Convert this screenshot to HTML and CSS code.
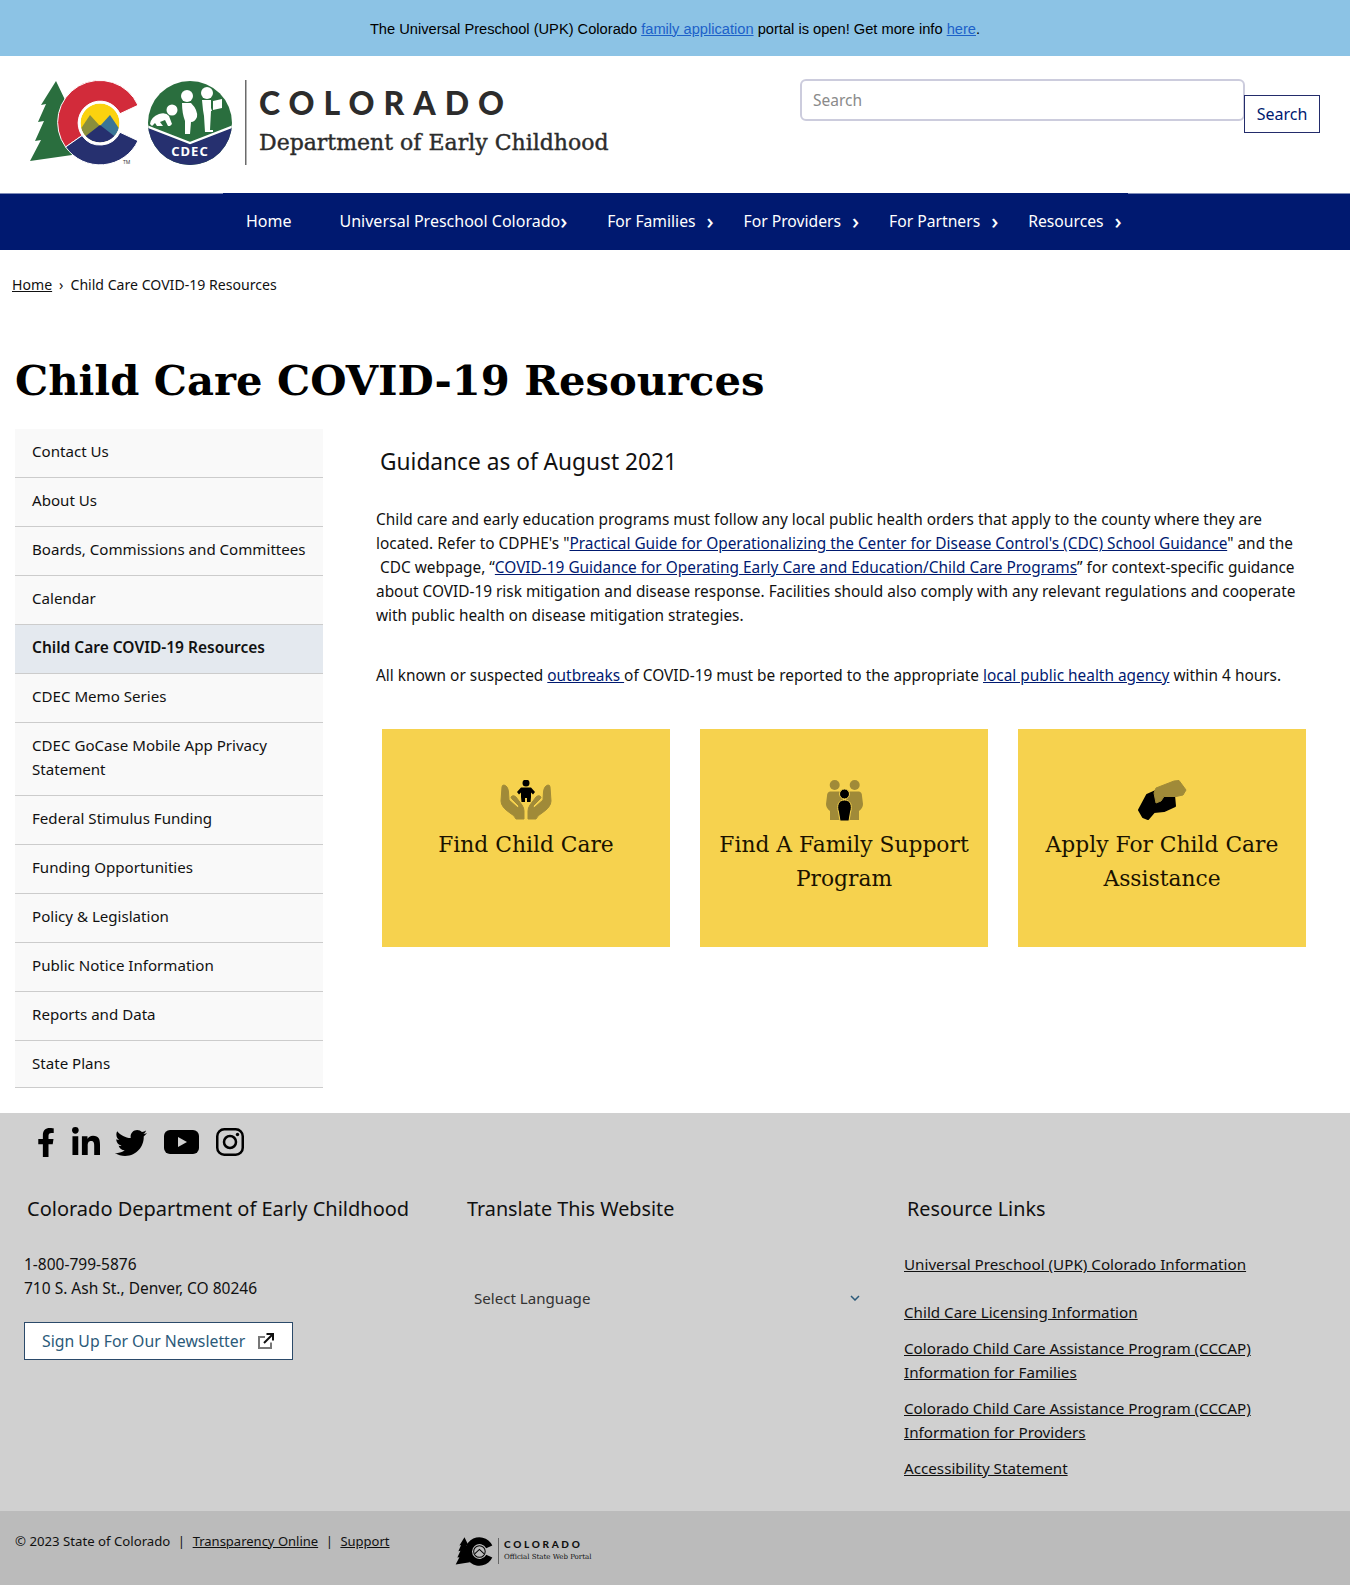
FILE: index.html
```html
<!DOCTYPE html>
<html lang="en">
<head>
<meta charset="utf-8">
<title>Child Care COVID-19 Resources</title>
<link rel="stylesheet" href="styles.css">
</head>
<body>
<div class="banner"><p>The Universal Preschool (UPK) Colorado <a href="#">family application</a> portal is open! Get more info <a href="#">here</a>.</p></div>
<header class="site-header">
  <a class="logo" href="#">
    <svg class="logo-mark" viewBox="28 78 220 90" width="220" height="90">
      <defs>
        <clipPath id="sun"><circle cx="100" cy="123" r="19.5"/></clipPath>
        <clipPath id="badge"><circle cx="190" cy="123" r="42"/></clipPath>
      </defs>
      <polygon fill="#2a6e3e" points="56,81 67,104 62,104 70,130 72,155 30,161 41,140 35,141 44,121 38,122 46,104 41,105"/>
      <path fill="#d22b3a" stroke="#fff" stroke-width="1" d="M138 105.3A42 42 0 1 0 65.6 147L82 135.6A22 22 0 1 1 120 113.7Z"/>
      <path fill="#26306f" stroke="#fff" stroke-width="1" d="M65.6 147A42 42 0 0 0 138 140.7L120 132.3A22 22 0 0 1 82 135.6Z"/>
      <g clip-path="url(#sun)">
        <rect x="78" y="100" width="44" height="46" fill="#fbd20f"/>
        <polygon fill="#8a8f3c" points="78,133 90,115 100,126 90,145"/>
        <polygon fill="#3a7596" points="122,133 110,115 100,126 110,145"/>
        <polygon fill="#26306f" points="78,142 100,125 122,142 122,146 78,146"/>
      </g>
      <circle cx="100" cy="123" r="20.5" fill="none" stroke="#fff" stroke-width="2"/>
      <text class="tm" x="123" y="164">TM</text>
      <g clip-path="url(#badge)">
        <rect x="148" y="81" width="84" height="84" fill="#2a6e3e"/>
        <polygon fill="#26306f" points="146,127 190,144 234,127 234,166 146,166"/>
        <polyline fill="none" stroke="#fff" stroke-width="2.2" points="146,126 190,143 234,126"/>
      </g>
      <g fill="#fff">
        <circle cx="172" cy="110" r="5.500"/>
        <path d="M150 124Q151 117 159 114Q166 112 169 116L172 124L170 126H168L165 120L160 122L163 126H157L155 123L152 126Z"/>
        <circle cx="187" cy="96" r="6"/>
        <path d="M182 103H191Q198 110 197 117Q195 122 191 122L190 134H185L185 121Q182 113 182 103Z"/>
        <circle cx="207" cy="93" r="6"/>
        <path d="M202 100H211L211 108L212 111H211L210 130H213V132H205L204 116L203 110Z"/>
        <path d="M213 101L222 99V108L213 110Z"/>
      </g>
      <text class="cdec" x="190" y="156">CDEC</text>
      <rect x="245" y="80" width="1.5" height="85" fill="#6b6b6b"/>
    </svg>
    <span class="logo-text">
      <span class="logo-state">COLORADO</span>
      <span class="logo-dept">Department of Early Childhood</span>
    </span>
  </a>
  <form class="search">
    <input class="search-input" type="text" placeholder="Search">
    <button class="search-btn" type="button">Search</button>
  </form>
</header>
<nav class="main-nav">
  <ul class="nav-list">
    <li class="nav-home"><a href="#">Home</a></li>
    <li class="nav-tight"><a href="#">Universal Preschool Colorado</a><span class="chev">›</span></li>
    <li><a href="#">For Families</a><span class="chev">›</span></li>
    <li><a href="#">For Providers</a><span class="chev">›</span></li>
    <li><a href="#">For Partners</a><span class="chev">›</span></li>
    <li><a href="#">Resources</a><span class="chev">›</span></li>
  </ul>
</nav>
<div class="breadcrumb"><a href="#">Home</a><span class="crumb-sep">›</span>Child Care COVID-19 Resources</div>
<h1 class="page-title">Child Care COVID-19 Resources</h1>
<div class="page-body">
  <ul class="side-nav">
    <li><a href="#">Contact Us</a></li>
    <li><a href="#">About Us</a></li>
    <li><a href="#">Boards, Commissions and Committees</a></li>
    <li><a href="#">Calendar</a></li>
    <li class="active"><a href="#">Child Care COVID-19 Resources</a></li>
    <li><a href="#">CDEC Memo Series</a></li>
    <li><a href="#">CDEC GoCase Mobile App Privacy Statement</a></li>
    <li><a href="#">Federal Stimulus Funding</a></li>
    <li><a href="#">Funding Opportunities</a></li>
    <li><a href="#">Policy &amp; Legislation</a></li>
    <li><a href="#">Public Notice Information</a></li>
    <li><a href="#">Reports and Data</a></li>
    <li><a href="#">State Plans</a></li>
  </ul>
  <main class="content">
    <h2 class="guidance">Guidance as of August 2021</h2>
    <p class="para">Child care and early education programs must follow any local public health orders that apply to the county where they are<br>located. Refer to CDPHE's "<a href="#">Practical Guide for Operationalizing the Center for Disease Control's (CDC) School Guidance</a>" and the<br>&nbsp;CDC webpage, “<a href="#">COVID-19 Guidance for Operating Early Care and Education/Child Care Programs</a>” for context-specific guidance<br>about COVID-19 risk mitigation and disease response. Facilities should also comply with any relevant regulations and cooperate<br>with public health on disease mitigation strategies.</p>
    <p class="para para-second">All known or suspected <a href="#">outbreaks </a>of COVID-19 must be reported to the appropriate <a href="#">local public health agency</a> within 4 hours.</p>
    <div class="cards">
      <a class="card" href="#">
        <svg class="card-icon" viewBox="0 0 52 41" width="52" height="41">
          <g fill="#a08a38" stroke="#a08a38" stroke-width="1" stroke-linejoin="round">
            <path d="M2 7Q2 5 4 5Q8 6 8.500 12L9 20L18 28L19 26L12 19Q10 17 12 16Q14 15 16 17L22 25Q24 28 24 31V39H16Q14 35 10 33Q1 27 1 21Z"/>
            <path d="M50 7Q50 5 48 5Q44 6 43.500 12L43 20L34 28L33 26L40 19Q42 17 40 16Q38 15 36 17L30 25Q28 28 28 31V39H36Q38 35 42 33Q51 27 51 21Z"/>
          </g>
          <circle cx="26" cy="3" r="3.500"/>
          <path d="M21 7.500H31L35 12L33 14.500L31 12.500V17L30.500 22H27V18H25V22H21.500L21 17V12.500L19 14.500L17 12Z"/>
        </svg>
        <span class="card-title">Find Child Care</span>
      </a>
      <a class="card" href="#">
        <svg class="card-icon" viewBox="0 0 37 41" width="37" height="41">
          <g fill="#a08a38">
            <circle cx="8.700" cy="5" r="5"/>
            <circle cx="28.700" cy="5" r="5"/>
            <path d="M4 11.500H13Q17 12 17 18V40H4V31Q0 28 0 24L1 16Q1 12 4 11.500Z"/>
            <path d="M33 11.500H24Q20 12 20 18V40H33V31Q37 28 37 24L36 16Q36 12 33 11.500Z"/>
          </g>
          <circle cx="18.500" cy="14" r="5" stroke="#f6d24e" stroke-width="1"/>
          <path d="M18.500 20C12 20 10.500 26 12.500 32L14 41H23L24.500 32C26.500 26 25 20 18.500 20Z" stroke="#f6d24e" stroke-width="1"/>
        </svg>
        <span class="card-title">Find A Family Support Program</span>
      </a>
      <a class="card" href="#">
        <svg class="card-icon" viewBox="0 0 49 41" width="49" height="41">
          <path stroke="#000" stroke-width="2" stroke-linejoin="round" d="M9 15L18 11L36 15L37 26L26 31L16 32L10 39L5 37L1 30Z"/>
          <path fill="#a08a38" stroke="#a08a38" stroke-width="1" stroke-linejoin="round" d="M18 8L36 1L41 0.500L48 10L45 15L38 16.500H26L23 21L18 23L16 13Z"/>
        </svg>
        <span class="card-title">Apply For Child Care Assistance</span>
      </a>
    </div>
  </main>
</div>
<footer class="site-footer">
  <div class="social">
    <svg class="ic-f" viewBox="0 0 320 512"><path d="M279.14 288l14.22-92.66h-88.91v-60.13c0-25.35 12.42-50.06 52.24-50.06h40.42V6.26S260.43 0 225.36 0c-73.22 0-121.08 44.38-121.08 124.72v70.62H22.89V288h81.39v224h100.17V288z"/></svg>
    <svg class="ic-in" viewBox="0 0 448 448"><path d="M100.28 448H7.4V148.9h92.88zM53.79 108.1C24.09 108.1 0 83.5 0 53.8a53.79 53.79 0 0 1 107.58 0c0 29.7-24.1 54.3-53.79 54.3zM447.9 448h-92.68V302.4c0-34.7-.7-79.2-48.29-79.2-48.29 0-55.69 37.7-55.69 76.7V448h-92.78V148.9h89.08v40.8h1.3c12.4-23.5 42.69-48.3 87.88-48.3 94 0 111.28 61.9 111.28 142.3V448z"/></svg>
    <svg class="ic-tw" viewBox="0 0 512 512"><path d="M459.37 151.716c.325 4.548.325 9.097.325 13.645 0 138.72-105.583 298.558-298.558 298.558-59.452 0-114.68-17.219-161.137-47.106 8.447.974 16.568 1.299 25.34 1.299 49.055 0 94.213-16.568 130.274-44.832-46.132-.975-84.792-31.188-98.112-72.772 6.498.974 12.995 1.624 19.818 1.624 9.421 0 18.843-1.3 27.614-3.573-48.081-9.747-84.143-51.98-84.143-102.985v-1.299c13.969 7.797 30.214 12.67 47.431 13.319-28.264-18.843-46.781-51.005-46.781-87.391 0-19.492 5.197-37.36 14.294-52.954 51.655 63.675 129.3 105.258 216.365 109.807-1.624-7.797-2.599-15.918-2.599-24.04 0-57.828 46.782-104.934 104.934-104.934 30.213 0 57.502 12.67 76.67 33.137 23.715-4.548 46.456-13.32 66.599-25.34-7.798 24.366-24.366 44.833-46.132 57.827 21.117-2.273 41.584-8.122 60.426-16.243-14.292 20.791-32.161 39.308-52.628 54.253z"/></svg>
    <svg class="ic-yt" viewBox="0 0 35 24"><rect width="35" height="24" rx="6"/><polygon fill="#d0d0d0" points="14,7 14,17 23,12"/></svg>
    <svg class="ic-ig" viewBox="0 0 28 28"><rect x="1.250" y="1.250" width="25.500" height="25.500" rx="7" fill="none" stroke="#000" stroke-width="2.500"/><circle cx="14" cy="14" r="6" fill="none" stroke="#000" stroke-width="2.500"/><circle cx="21.500" cy="6.500" r="1.700"/></svg>
  </div>
  <div class="footer-cols">
    <section class="f-col">
      <h3 class="f-head f-head-first">Colorado Department of Early Childhood</h3>
      <p class="f-text">1-800-799-5876<br>710 S. Ash St., Denver, CO 80246</p>
      <a class="newsletter" href="#">Sign Up For Our Newsletter
        <svg class="ext" viewBox="0 0 18 18" width="18" height="18"><path d="M14 10.500V16H2V5H8" fill="none" stroke="#777" stroke-width="2"/><path d="M7 11L15 3M9.500 2H16V8.500" fill="none" stroke="#111" stroke-width="2"/></svg>
      </a>
    </section>
    <section class="f-col">
      <h3 class="f-head">Translate This Website</h3>
      <div class="lang">Select Language
        <svg viewBox="0 0 10 6" width="10" height="6"><path d="M1 1L5 5L9 1" fill="none" stroke="#2b5a7a" stroke-width="1.500"/></svg>
      </div>
    </section>
    <section class="f-col">
      <h3 class="f-head f-head-links">Resource Links</h3>
      <ul class="f-links">
        <li class="gap-big"><a href="#">Universal Preschool (UPK) Colorado Information</a></li>
        <li><a href="#">Child Care Licensing Information</a></li>
        <li><a href="#">Colorado Child Care Assistance Program (CCCAP) Information for Families</a></li>
        <li><a href="#">Colorado Child Care Assistance Program (CCCAP) Information for Providers</a></li>
        <li><a href="#">Accessibility Statement</a></li>
      </ul>
    </section>
  </div>
</footer>
<div class="sub-footer">
  <p class="legal">© 2023 State of Colorado<span class="pipe">|</span><a href="#">Transparency Online</a><span class="pipe">|</span><a href="#">Support</a></p>
  <div class="portal">
    <svg viewBox="28 78 112 90" width="38" height="31">
      <polygon points="56,81 67,104 62,104 70,130 72,155 30,161 41,140 35,141 44,121 38,122 46,104 41,105"/>
      <path d="M138 105.3A42 42 0 1 0 138 140.7L120 132.3A22 22 0 1 1 120 113.700Z"/>
      <circle cx="100" cy="123" r="17" fill="none" stroke="#000" stroke-width="3"/>
      <polyline fill="none" stroke="#000" stroke-width="3" points="86,130 100,117 114,130"/>
    </svg>
    <span class="portal-text">
      <span class="portal-state">COLORADO</span>
      <span class="portal-sub">Official State Web Portal</span>
    </span>
  </div>
</div>
</body>
</html>
```
FILE: styles.css
```css
* { box-sizing: border-box; }
html, body { margin: 0; padding: 0; }
html { background: #8cc3e5; }
body {
  width: 1350px;
  font-family: "Noto Sans", sans-serif;
  font-size: 15.400px;
  line-height: 24px;
  color: #111;
  background: #fff;
}
ul { list-style: none; margin: 0; padding: 0; }
p, h1, h2, h3 { margin: 0; font-weight: 400; }
a { color: inherit; }

.banner {
  height: 56px;
  padding-top: 1px;
  background: #8cc3e5;
  display: flex;
  align-items: center;
  justify-content: center;
  font-family: "Liberation Sans", sans-serif;
  font-size: 14.670px;
  color: #000;
}
.banner a { color: #1c61c9; }

.site-header {
  height: 137px;
  display: flex;
  justify-content: space-between;
  padding: 22px 30px 0 28px;
}
.logo { display: flex; color: #2c2c2c; text-decoration: none; height: 90px; }
.logo-mark { display: block; flex: none; }
.tm { font: 5px "Noto Sans", sans-serif; fill: #333; }
.cdec { font: 700 13px "Noto Sans", sans-serif; letter-spacing: 1px; fill: #fff; text-anchor: middle; }
.logo-text { display: flex; flex-direction: column; margin-left: 11px; }
.logo-state {
  font-family: "Lato", sans-serif;
  font-weight: 900;
  font-size: 32px;
  line-height: 32px;
  letter-spacing: 9px;
  margin-top: 9px;
}
.logo-dept {
  font-family: "DejaVu Serif", serif;
  font-size: 22px;
  line-height: 28px;
  margin-top: 10px;
  white-space: nowrap;
  -webkit-text-stroke: 0.4px #2c2c2c;
}
.search { display: flex; align-items: flex-start; margin-top: 1px; }
.search-input {
  width: 445px;
  height: 42px;
  border: 2px solid #ccd;
  border-radius: 6px;
  padding: 0 11px;
  font: 15.500px "Noto Sans", sans-serif;
  background: #fff;
}
.search-input::placeholder { color: #8a8a8a; }
.search-btn {
  width: 76px;
  height: 38px;
  margin-top: 16px;
  margin-left: -1px;
  border: 1.500px solid #232c6b;
  background: #fff;
  color: #001970;
  font: 16px "Noto Sans", sans-serif;
}

.main-nav {
  height: 57px;
  padding: 1px 0 2px;
  background: linear-gradient(to right, #7f8cb8 223px, #001970 223px, #001970 1128px, #7f8cb8 1128px) top / 100% 1px no-repeat, #001970;
}
.nav-list {
  height: 100%;
  display: flex;
  align-items: center;
  padding-left: 246px;
  color: #fff;
  font-size: 15.700px;
}
.nav-list a { text-decoration: none; white-space: nowrap; }
.nav-list li { display: flex; align-items: center; margin-right: 29px; }
.nav-list .chev { font-size: 22px; line-height: 24px; margin-left: 11px; width: 8px; padding-bottom: 3px; font-weight: 500; }
.nav-list .nav-home { margin-right: 48px; }
.nav-list .nav-tight { margin-right: 39px; }
.nav-list .nav-tight .chev { margin-left: 0; }
.nav-tight a { font-size: 16px; }
.nav-home a { font-size: 16px; }

.breadcrumb { padding: 23px 12px 0; font-size: 14.100px; color: #111; height: 64px; }
.crumb-sep { margin: 0 7px; }
.page-title {
  font-family: "DejaVu Serif", serif;
  font-weight: 700;
  font-size: 41.700px;
  line-height: 60px;
  margin: 37px 0 18px 15px;
  color: #000;
  white-space: nowrap;
}

.page-body { display: flex; padding-left: 15px; height: 684px; }
.side-nav { width: 308px; flex: none; font-size: 15.100px; }
.side-nav li { background: #f9f9f9; border-bottom: 1px solid #ccc; padding: 10px 10px 14px 17px; }
.side-nav li:last-child { padding-bottom: 12px; }
.side-nav a { text-decoration: none; color: #111; }
.side-nav .active { background: #e4e9ef; font-weight: 600; font-size: 15.500px; }
.content { padding-left: 53px; width: 1000px; }
.guidance {
  font-size: 22.700px;
  line-height: 28px;
  margin: 19px 0 32px 4px;
  color: #111;
}
.para { white-space: nowrap; color: #111; }
.para a { color: #001970; }
.para-second { margin-top: 36px; }
.cards { display: flex; gap: 30px; margin: 41px 0 0 6px; }
.card {
  width: 288px;
  height: 218px;
  background: #f6d24e;
  display: flex;
  flex-direction: column;
  align-items: center;
  padding: 51px 16px 0;
  text-decoration: none;
  text-align: center;
  color: #1a1200;
}
.card-icon { display: block; flex: none; }
.card-title {
  font-family: "DejaVu Serif", serif;
  font-size: 21.800px;
  line-height: 34px;
  margin-top: 7px;
}

.site-footer { height: 398px; background: #d0d0d0; color: #111; padding-top: 14px; }
.social { display: flex; align-items: flex-start; height: 32px; padding-left: 37px; }
.social svg { display: block; flex: none; }
.ic-f { width: 18px; height: 31px; }
.ic-in { width: 28px; height: 28px; margin-left: 17px; }
.ic-tw { width: 32px; height: 32px; margin-left: 15px; }
.ic-yt { width: 35px; height: 24px; margin: 3px 0 0 17px; }
.ic-ig { width: 28px; height: 28px; margin: 1px 0 0 17px; }
.footer-cols { display: grid; grid-template-columns: 443px 437px 1fr; padding: 36px 0 0 24px; }
.f-head { font-size: 19.800px; line-height: 28px; color: #111; }
.f-head-first { margin-left: 3px; font-size: 20px; }
.f-head-links { margin-left: 3px; }
.f-text { margin-top: 29px; font-size: 15.500px; }
.newsletter {
  display: flex;
  align-items: center;
  justify-content: space-between;
  width: 269px;
  height: 38px;
  margin-top: 22px;
  padding: 0 17px;
  background: #fff;
  border: 1px solid #2b4a6a;
  color: #2b5a7a;
  text-decoration: none;
  font-size: 15.800px;
}
.ext { flex: none; }
.lang {
  display: flex;
  align-items: center;
  justify-content: space-between;
  width: 393px;
  margin-top: 63px;
  padding-left: 7px;
  color: #333;
  font-size: 15.100px;
}
.f-links { margin-top: 29px; font-size: 15.200px; }
.f-links li { margin-bottom: 12px; width: 380px; }
.f-links .gap-big { margin-bottom: 24px; }

.sub-footer {
  height: 74px;
  background: #bbb;
  display: flex;
  padding: 18px 0 0 15px;
  font-size: 13.200px;
  margin-bottom: 1px;
}
.legal { width: 440px; white-space: nowrap; }
.legal a { font-size: 13px; }
.pipe { margin: 0 7.500px; }
.portal { display: flex; align-items: center; height: 40px; margin-top: 2px; }
.portal-text { display: flex; flex-direction: column; margin-left: 5px; padding-left: 5px; border-left: 1px solid #666; }
.portal-state { font: 900 10px/13px "Lato", sans-serif; letter-spacing: 2.700px; }
.portal-sub { font: 7px/13px "DejaVu Serif", serif; }
```
